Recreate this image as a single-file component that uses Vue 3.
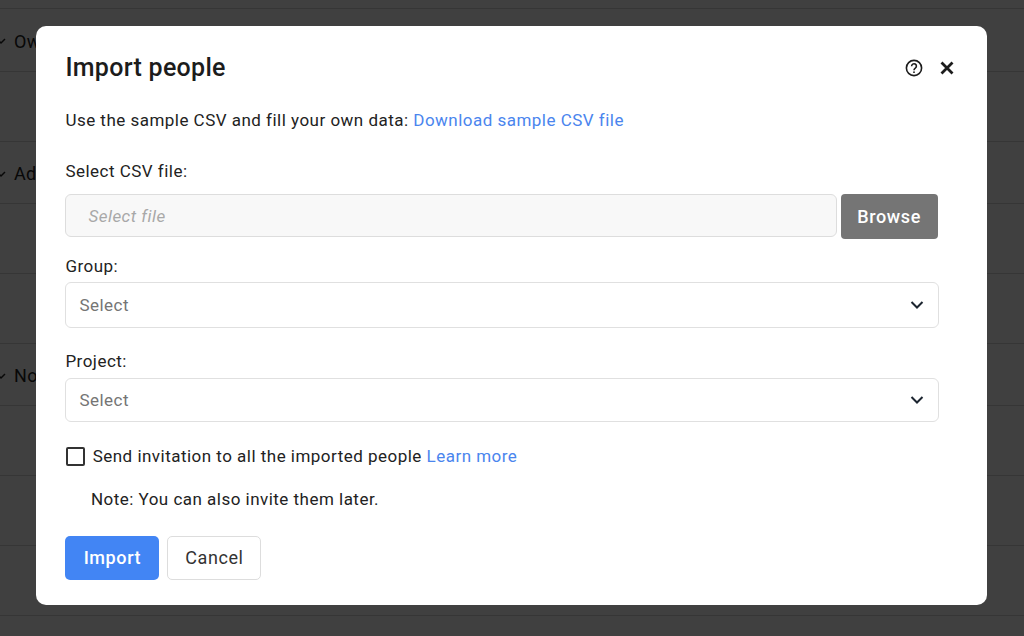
<script setup>
const sections = [
  { name: 'Owner', rows: 1 },
  { name: 'Admin', rows: 2 },
  { name: 'Normal', rows: 3 }
]
</script>

<template>
  <div class="page">
    <div class="bg">
      <div class="top"></div>
      <template v-for="s in sections" :key="s.name">
        <div class="sec">
          <svg class="tick" width="8" height="8" viewBox="0 0 8 8"><path d="M0 4l2 2 4-4" fill="none" stroke="#222" stroke-width="1.5"/></svg>
          <span>{{ s.name }}</span>
        </div>
        <div v-for="n in s.rows" :key="n" class="row"></div>
      </template>
    </div>
    <div class="overlay">
      <div class="modal">
        <div class="head">
          <h1>Import people</h1>
          <div class="head-icons">
            <svg width="20" height="20" viewBox="0 0 20 20" fill="none" stroke="#1c1c1c">
              <circle cx="10" cy="10" r="7.6" stroke-width="1.6"/>
              <path d="M7.6 8.2a2.4 2.4 0 1 1 3.7 2c-.9.6-1.3 1-1.3 2" stroke-width="1.6"/>
              <circle cx="10" cy="14.2" r=".9" fill="#1c1c1c" stroke="none"/>
            </svg>
            <svg width="16" height="16" viewBox="0 0 16 16" fill="none" stroke="#1c1c1c">
              <path d="M2.5 2.5l11 11M13.5 2.5l-11 11" stroke-width="2.8"/>
            </svg>
          </div>
        </div>
        <p class="intro">Use the sample CSV and fill your own data: <a>Download sample CSV file</a></p>
        <label class="lab first">Select CSV file:</label>
        <div class="file-row">
          <div class="file">Select file</div>
          <button class="browse">Browse</button>
        </div>
        <label class="lab group">Group:</label>
        <div class="select">
          <span>Select</span>
          <svg width="14" height="10" viewBox="0 0 14 10" fill="none"><path d="M1.5 2l5.5 5.5L12.5 2" stroke="#1c2530" stroke-width="2"/></svg>
        </div>
        <label class="lab project">Project:</label>
        <div class="select short">
          <span>Select</span>
          <svg width="14" height="10" viewBox="0 0 14 10" fill="none"><path d="M1.5 2l5.5 5.5L12.5 2" stroke="#1c2530" stroke-width="2"/></svg>
        </div>
        <div class="check-row">
          <span class="box"></span>
          <span>Send invitation to all the imported people <a>Learn more</a></span>
        </div>
        <p class="note">Note: You can also invite them later.</p>
        <div class="actions">
          <button class="primary">Import</button>
          <button class="cancel">Cancel</button>
        </div>
      </div>
    </div>
  </div>
</template>

<style>
html, body { margin: 0; background: #fff; }
</style>

<style scoped>
.page {
  position: relative;
  width: 1024px;
  height: 636px;
  overflow: hidden;
  font-family: Roboto, "Liberation Sans", sans-serif;
  color: #222;
}
.top { box-sizing: border-box; height: 9px; border-bottom: 1px solid #d8d8d8; }
.sec {
  height: 62px;
  box-sizing: border-box;
  border-bottom: 1px solid #d8d8d8;
  display: flex;
  align-items: center;
  gap: 7px;
  padding-top: 2px;
  font-size: 18px;
  letter-spacing: .3px;
}
.top + .sec { height: 63px; padding-top: 2px; }
.tick { margin-left: -1px; }
.row { height: 70px; box-sizing: border-box; border-bottom: 1px solid #d8d8d8; }
.overlay {
  position: absolute;
  inset: 0;
  background: rgba(0, 0, 0, .75);
  padding: 26px 37px 31px 36px;
  box-sizing: border-box;
}
.modal {
  height: 579px;
  box-sizing: border-box;
  background: #fff;
  border-radius: 10px;
  padding: 24px 48.4px 0 29.4px;
  font-size: 17px;
  letter-spacing: .48px;
  color: #222;
}
.head { display: flex; justify-content: space-between; align-items: center; height: 34px; }
h1 { margin: 0; font-size: 25px; font-weight: 500; letter-spacing: .3px; color: #1c1c1c; }
.head-icons { display: flex; align-items: center; gap: 14.4px; margin-right: -16px; padding-top: 1px; }
.intro { margin: 24px 0 0; line-height: 24px; height: 24px; }
a { color: #4a85ee; }
.lab { display: block; line-height: 24px; height: 24px; }
.first { margin-top: 27px; }
.group { margin-top: 15px; }
.project { margin-top: 21px; }
.file-row { display: flex; gap: 4px; margin-top: 11px; padding-right: 1px; }
.file {
  flex: 1;
  height: 43px;
  box-sizing: border-box;
  border: 1px solid #ddd;
  border-radius: 6px;
  background: #f8f8f8;
  color: #a8a8a8;
  font-style: italic;
  display: flex;
  align-items: center;
  padding-left: 22px;
}
button { font-family: inherit; letter-spacing: .6px; font-size: 18px; cursor: pointer; padding: 0 0 1px; }
.browse {
  width: 97px;
  height: 45px;
  border: 0;
  border-radius: 4px;
  background: #757575;
  color: #fff;
  font-weight: 500;
}
.select {
  height: 46px;
  margin-top: 4px;
  box-sizing: border-box;
  border: 1px solid #e0e0e0;
  border-radius: 6px;
  display: flex;
  align-items: center;
  justify-content: space-between;
  padding: 0 14px 0 13px;
  color: #757575;
}
.select.short { height: 44px; margin-top: 5px; }
.check-row { display: flex; align-items: center; gap: 8px; margin-top: 22px; height: 24px; }
.box {
  width: 19px;
  height: 19px;
  margin-left: .3px;
  box-sizing: border-box;
  border: 2px solid #333;
  border-radius: 2px;
}
.note { margin: 19px 0 0 25.5px; line-height: 24px; height: 24px; }
.actions { display: flex; gap: 8px; margin-top: 25px; }
.primary {
  width: 94px;
  height: 44px;
  border: 0;
  border-radius: 5px;
  background: #4285f4;
  color: #fff;
  font-weight: 500;
}
.cancel {
  width: 94px;
  height: 44px;
  box-sizing: border-box;
  border: 1px solid #ddd;
  border-radius: 5px;
  background: #fff;
  color: #333;
}
</style>
